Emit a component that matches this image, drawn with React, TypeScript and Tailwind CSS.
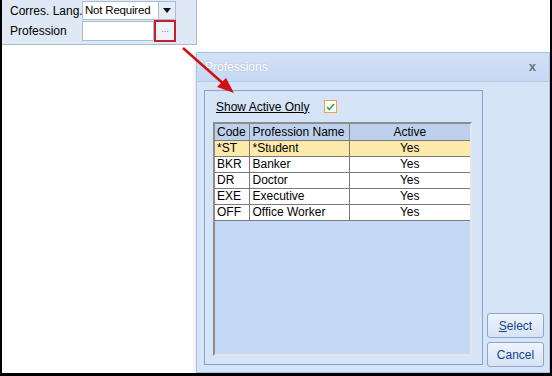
import React from "react";

const rows = [
  { code: "*ST", name: "*Student", active: "Yes", selected: true },
  { code: "BKR", name: "Banker", active: "Yes" },
  { code: "DR", name: "Doctor", active: "Yes" },
  { code: "EXE", name: "Executive", active: "Yes" },
  { code: "OFF", name: "Office Worker", active: "Yes" },
];

const FormPanel = () => (
  <div className="flex h-[45px] w-[195px] flex-col border-r border-b border-[#a8bcd6] bg-[#dfe8f5] pt-[1px] pl-[8px]">
    <div className="flex h-[19px] items-center">
      <span className="w-[72px] whitespace-nowrap text-[12px] text-black">Corres. Lang.</span>
      <div className="flex h-[19px] w-[94px] items-center border border-[#a8bcd6] bg-white">
        <span className="flex-1 pl-[2px] whitespace-nowrap text-[11.5px] tracking-[-0.2px]">Not Required</span>
        <div className="flex h-full w-[17px] items-center justify-center border-l border-[#a8bcd6] bg-[#e4ecf7]">
          <svg width="8" height="5" viewBox="0 0 8 5">
            <path d="M0 0h8L4 5z" fill="#111" />
          </svg>
        </div>
      </div>
    </div>
    <div className="flex h-[22px] items-center">
      <span className="w-[72px] whitespace-nowrap text-[12px] text-black">Profession</span>
      <div className="flex h-[20px] w-[72px] border border-[#a8bcd6] bg-white" />
      <div className="flex h-[22px] w-[22px] items-center justify-center border-2 border-[#c8202a] bg-[#eef3fa]">
        <span className="mt-[-4px] text-[9px] leading-none text-[#5a7fb5]">...</span>
      </div>
    </div>
  </div>
);

const Grid = () => (
  <div className="h-[234px] w-[259px] border-2 border-t-[#8c8c8c] border-l-[#8c8c8c] border-r-[#e6e6e6] border-b-[#e6e6e6] bg-[#c3d9f6]">
    <table className="w-full border-collapse text-[12px] leading-none">
      <thead>
        <tr className="h-[16px] bg-[#bdd1ed]">
          <th className="w-[34px] border-r border-b border-[#7a7a7a] pl-[2px] text-left font-normal">Code</th>
          <th className="w-[100px] border-r border-b border-[#7a7a7a] pl-[3px] text-left font-normal">Profession Name</th>
          <th className="border-b border-[#7a7a7a] text-center font-normal">Active</th>
        </tr>
      </thead>
      <tbody>
        {rows.map((r) => (
          <tr key={r.code} className={r.selected ? "h-[16px] bg-[#fde9a9]" : "h-[16px] bg-white"}>
            <td className="border-r border-b border-[#7a7a7a] pl-[2px]">{r.code}</td>
            <td className="border-r border-b border-[#7a7a7a] pl-[3px]">{r.name}</td>
            <td className="border-b border-[#7a7a7a] text-center">{r.active}</td>
          </tr>
        ))}
      </tbody>
    </table>
  </div>
);

const DialogButton = ({ children }: { children: React.ReactNode }) => (
  <div className="flex h-[25px] w-[57px] items-center justify-center rounded-[3px] border border-[#8ea6c8] bg-gradient-to-b from-[#eef4fc] to-[#d6e3f5] text-[12px] text-[#15428b]">
    {children}
  </div>
);

const ProfessionsDialog = () => (
  <div className="absolute top-[52px] left-[194px] flex h-[321px] w-[354px] flex-col border border-[#a9c3e6] bg-[#d6e4f8] shadow-[-2px_0_3px_rgba(0,0,0,0.08)]">
    <div className="flex h-[28px] items-center justify-between bg-gradient-to-b from-[#d2e1f5] to-[#c6d9f2] pr-[13px] pl-[8px]">
      <span className="text-[12px] text-white [text-shadow:0_0_2px_#9fb6d8]">Professions</span>
      <span className="text-[13px] font-bold text-[#6a7480]">x</span>
    </div>
    <div className="flex flex-1 border-t border-[#b6cbe8] pt-[8px] pl-[7px]">
      <div className="flex h-[275px] w-[279px] flex-col border border-[#8ba2c4] pt-[7px] pl-[8px]">
        <div className="flex h-[17px] items-center pl-[3px]">
          <span className="text-[12px] text-black underline">Show Active Only</span>
          <div className="ml-[15px] flex h-[13px] w-[13px] items-center justify-center border border-[#f0a048] bg-white">
            <svg width="9" height="8" viewBox="0 0 9 8">
              <path d="M1 4l2.3 2.5L8 1" fill="none" stroke="#3bab3b" strokeWidth="1.8" />
            </svg>
          </div>
        </div>
        <div className="mt-[7px]">
          <Grid />
        </div>
      </div>
      <div className="ml-[4px] flex flex-col justify-end gap-[4px] pb-[5px]">
        <DialogButton>
          <span>
            <span className="underline">S</span>elect
          </span>
        </DialogButton>
        <DialogButton>Cancel</DialogButton>
      </div>
    </div>
  </div>
);

const Arrow = () => (
  <svg className="pointer-events-none absolute top-0 left-0" width="552" height="376">
    <line x1="181" y1="48" x2="224" y2="86" stroke="#d01010" strokeWidth="2.5" />
    <path d="M232 93 L215 87 L224 78 Z" fill="#d01010" />
  </svg>
);

export default function App() {
  return (
    <div className="relative h-[376px] w-[552px] overflow-hidden border-r-2 border-b-[3px] border-l-2 border-black bg-white font-['Liberation_Sans',Arial,sans-serif]">
      <FormPanel />
      <ProfessionsDialog />
      <Arrow />
    </div>
  );
}
